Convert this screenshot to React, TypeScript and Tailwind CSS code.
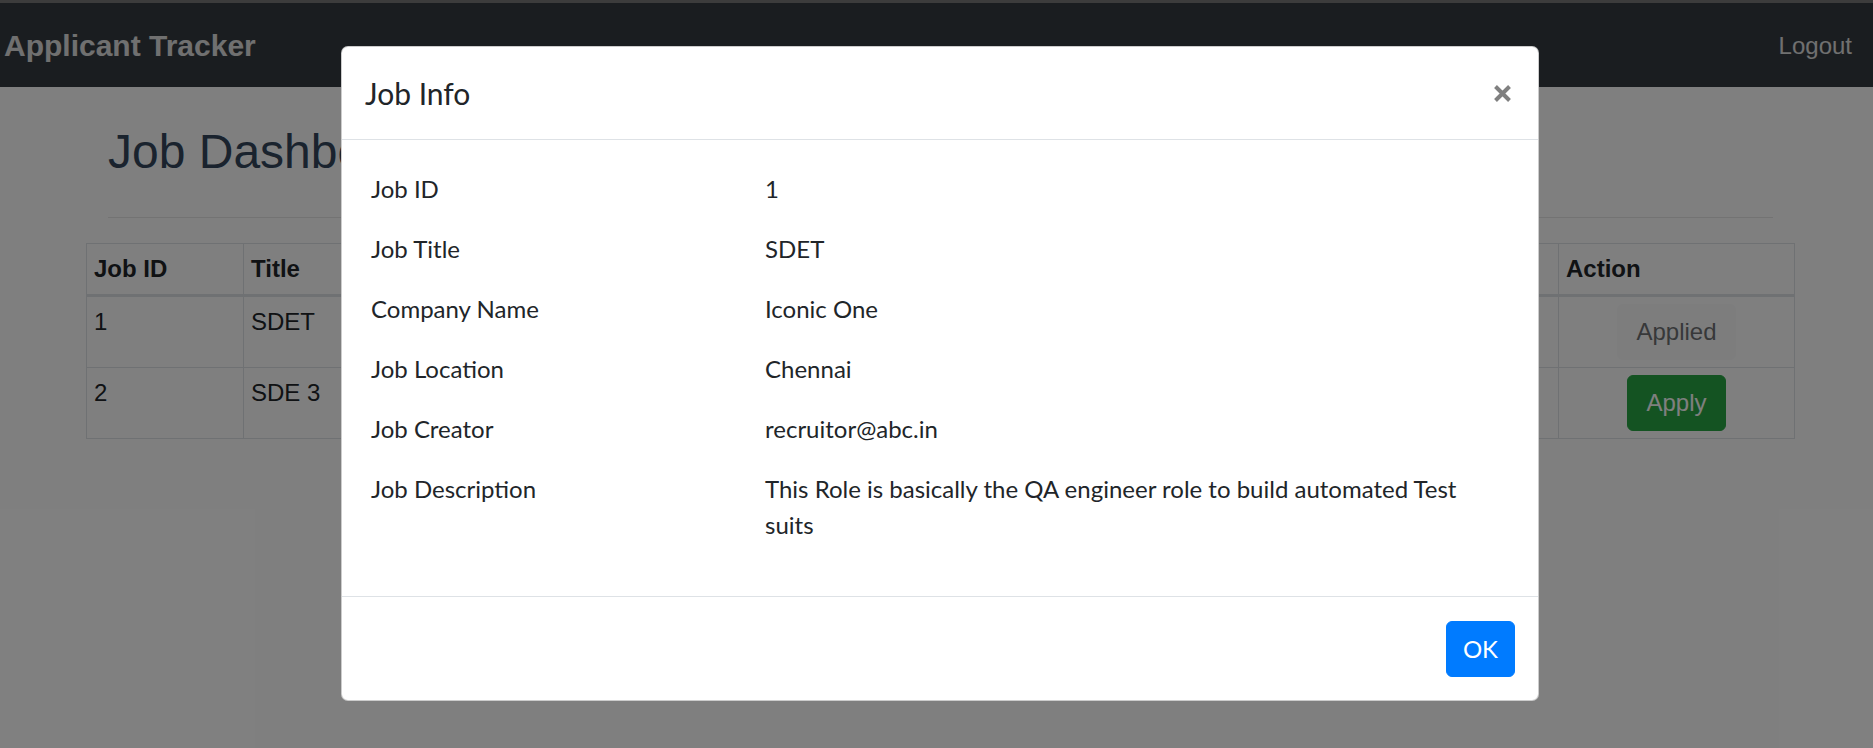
import React from "react";

interface Job {
  id: number;
  title: string;
  company: string;
  location: string;
  creator: string;
  applied: boolean;
}

const jobs: Job[] = [
  { id: 1, title: "SDET", company: "Iconic One", location: "Chennai", creator: "recruitor@abc.in", applied: true },
  { id: 2, title: "SDE 3", company: "Iconic One", location: "Bangalore", creator: "recruitor@abc.in", applied: false },
];

const info: [string, React.ReactNode][] = [
  ["Job ID", "1"],
  ["Job Title", "SDET"],
  ["Company Name", "Iconic One"],
  ["Job Location", "Chennai"],
  ["Job Creator", "recruitor@abc.in"],
  [
    "Job Description",
    <>
      This Role is basically the QA engineer role to build automated Test
      <br />
      suits
    </>,
  ],
];

function JobTable() {
  const th = "border border-[#dee2e6] border-b-[3px] p-[7px] text-left align-bottom font-bold";
  const td = "border border-[#dee2e6] p-[7px] align-top";
  return (
    <table className="mt-[25px] w-full table-fixed border-collapse text-[24px] leading-[36px] text-[#212529]">
      <colgroup>
        <col className="w-[157px]" />
        <col className="w-[240px]" />
        <col className="w-[320px]" />
        <col className="w-[300px]" />
        <col className="w-[455px]" />
        <col className="w-[236px]" />
      </colgroup>
      <thead>
        <tr>
          <th className={th}>Job ID</th>
          <th className={th}>Title</th>
          <th className={th}>Company</th>
          <th className={th}>Location</th>
          <th className={th}>Posted By</th>
          <th className={th}>Action</th>
        </tr>
      </thead>
      <tbody>
        {jobs.map((job) => (
          <tr key={job.id}>
            <td className={td}>{job.id}</td>
            <td className={td}>{job.title}</td>
            <td className={td}>{job.company}</td>
            <td className={td}>{job.location}</td>
            <td className={td}>{job.creator}</td>
            <td className={`${td} text-center`}>
              {job.applied ? (
                <button
                  disabled
                  className="rounded-[6px] border border-[#f8f9fa] bg-[#f8f9fa] px-[18px] py-[9px] leading-[36px] text-[#212529] opacity-65"
                >
                  Applied
                </button>
              ) : (
                <button className="rounded-[6px] border border-[#28a745] bg-[#28a745] px-[18px] py-[9px] leading-[36px] text-white">
                  Apply
                </button>
              )}
            </td>
          </tr>
        ))}
      </tbody>
    </table>
  );
}

function JobInfoModal() {
  return (
    <div className="absolute inset-0 bg-black/50">
      <div className="ml-[341px] mt-[46px] w-[1198px] rounded-[7px] border border-black/20 bg-white font-['Lato','Noto_Sans',sans-serif] text-[#212529]">
        <div className="flex h-[93px] items-center justify-between border-b border-[#dee2e6] pl-[23px] pr-[27px]">
          <h5 className="text-[30px] leading-[45px]">Job Info</h5>
          <svg width="17" height="17" viewBox="0 0 17 17">
            <path d="M1.5 1.5L15.5 15.5M15.5 1.5L1.5 15.5" stroke="#808080" strokeWidth="4" />
          </svg>
        </div>
        <div className="flex flex-col gap-[24px] pb-[53px] pl-[29px] pt-[31px] text-[24px] leading-[36px]">
          {info.map(([label, value]) => (
            <div key={label} className="grid grid-cols-[394px_1fr]">
              <div>{label}</div>
              <div>{value}</div>
            </div>
          ))}
        </div>
        <div className="flex justify-end border-t border-[#dee2e6] pb-[23px] pr-[23px] pt-[24px]">
          <button className="rounded-[6px] border border-[#007bff] bg-[#007bff] px-[16px] py-[9px] text-[24px] leading-[36px] text-white">
            OK
          </button>
        </div>
      </div>
    </div>
  );
}

export default function App() {
  return (
    <div className="relative h-[748px] overflow-hidden bg-white font-['Liberation_Sans',Arial,sans-serif]">
      <div className="h-[3px] bg-[#787878]" />
      <nav className="flex h-[84px] items-center justify-between bg-[#343a40] pl-[4px] pr-[21px]">
        <span className="text-[30px] font-bold text-[#e0e0e0]">Applicant Tracker</span>
        <a className="pt-[2px] text-[24px] text-[#e0e0e0]">Logout</a>
      </nav>
      <main className="pl-[86px] pr-[79px]">
        <div className="pl-[22px] pr-[21px] pt-[36px]">
          <h2 className="text-[48px] leading-[1.2] text-[#34475c]">Job Dashboard</h2>
          <hr className="mt-[36px] border-[#e6e6e6]" />
        </div>
        <JobTable />
      </main>
      <JobInfoModal />
    </div>
  );
}
